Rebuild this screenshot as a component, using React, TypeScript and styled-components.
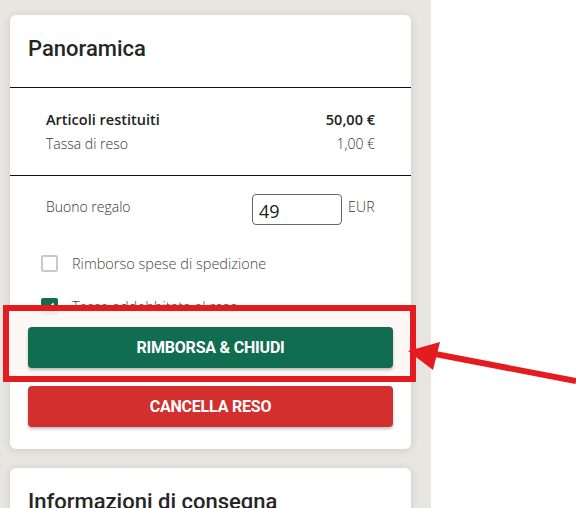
import React from "react";
import styled, { createGlobalStyle } from "styled-components";

const GlobalStyle = createGlobalStyle`
  html, body {
    margin: 0;
    padding: 0;
    background: #ffffff;
    width: 576px;
    height: 508px;
    overflow: hidden;
  }
  * {
    box-sizing: border-box;
  }
`;

const Page = styled.div`
  position: relative;
  display: flex;
  width: 576px;
  height: 508px;
  overflow: hidden;
`;

const Sidebar = styled.div`
  width: 431px;
  height: 100%;
  background: #e8e6e1;
  padding: 15px 20px 0 10px;
  display: flex;
  flex-direction: column;
  gap: 19px;
`;

const Card = styled.div`
  position: relative;
  background: #ffffff;
  border-radius: 6px;
  box-shadow: 0 1px 8px rgba(0, 0, 0, 0.12);
  flex-shrink: 0;
`;

const CardTitle = styled.h2`
  margin: 0;
  padding: 21px 18px 0;
  height: 72px;
  font-family: Roboto, "Liberation Sans", sans-serif;
  font-size: 22px;
  font-weight: 500;
  color: #262626;
`;

const Divider = styled.hr`
  margin: 0;
  border: none;
  border-top: 1px solid #111111;
`;

const Section = styled.div<{ $pad: string; $gap?: number }>`
  padding: ${(p) => p.$pad};
  font-family: "Open Sans", "Liberation Sans", sans-serif;
  display: flex;
  flex-direction: column;
  gap: ${(p) => p.$gap ?? 0}px;
`;

const Row = styled.div<{ $strong?: boolean }>`
  display: flex;
  justify-content: space-between;
  align-items: center;
  font-size: ${(p) => (p.$strong ? "14.5px" : "14px")};
  line-height: 24px;
  font-weight: ${(p) => (p.$strong ? 600 : 300)};
  color: ${(p) => (p.$strong ? "#222222" : "#333333")};
`;

const VoucherRow = styled.div`
  display: flex;
  align-items: center;
  font-size: 14px;
  color: #333333;
  font-weight: 300;
`;

const VoucherLabel = styled.span`
  flex: 1;
  margin-top: -7px;
`;

const AmountInput = styled.input`
  width: 90px;
  height: 31px;
  border: 1px solid #666666;
  border-radius: 4px;
  padding: 2px 6px 0;
  font-family: "Open Sans", "Liberation Sans", sans-serif;
  font-size: 18px;
  color: #222222;
  outline: none;
`;

const Currency = styled.span`
  margin-left: 6px;
  margin-top: -7px;
  letter-spacing: 0.3px;
`;

const CheckRow = styled.label`
  display: flex;
  align-items: center;
  gap: 14px;
  font-size: 14.5px;
  color: #444444;
  font-weight: 300;
  height: 17px;
  padding-left: 31px;
`;

const Box = styled.span<{ $checked?: boolean }>`
  width: 17px;
  height: 17px;
  border-radius: 2px;
  border: 2px solid ${(p) => (p.$checked ? "#116d50" : "#c9c9c9")};
  background: ${(p) => (p.$checked ? "#116d50" : "#ffffff")};
  display: flex;
  align-items: center;
  justify-content: center;
`;

const Buttons = styled.div`
  display: flex;
  flex-direction: column;
  gap: 18px;
  padding: 0 18px 22px;
`;

const ActionButton = styled.button<{ $color: string; $raised?: boolean }>`
  position: relative;
  z-index: ${(p) => (p.$raised ? 2 : "auto")};
  height: 41px;
  width: 100%;
  border: none;
  border-radius: 4px;
  background: ${(p) => p.$color};
  color: #ffffff;
  font-family: Roboto, "Liberation Sans", sans-serif;
  font-weight: 700;
  font-size: 16px;
  letter-spacing: -0.2px;
  box-shadow: 0 2px 3px rgba(0, 0, 0, 0.25);
`;

const Highlight = styled.div`
  position: absolute;
  z-index: 1;
  left: 3px;
  top: 305px;
  width: 413px;
  height: 77px;
  border: 6px solid #e51c1f;
  background: rgba(253, 247, 245, 0.94);
  pointer-events: none;
`;

const Arrow = styled.svg`
  position: absolute;
  z-index: 3;
  left: 0;
  top: 0;
  pointer-events: none;
`;

export default function App() {
  return (
    <Page>
      <GlobalStyle />
      <Sidebar>
        <Card>
          <CardTitle>Panoramica</CardTitle>
          <Divider />
          <Section $pad="20px 36px 19px">
            <Row $strong>
              <span>Articoli restituiti</span>
              <span>50,00 €</span>
            </Row>
            <Row>
              <span>Tassa di reso</span>
              <span>1,00 €</span>
            </Row>
          </Section>
          <Divider />
          <Section $pad="18px 36px 0">
            <VoucherRow>
              <VoucherLabel>Buono regalo</VoucherLabel>
              <AmountInput defaultValue="49" />
              <Currency>EUR</Currency>
            </VoucherRow>
          </Section>
          <Section $pad="30px 0 12px" $gap={26}>
            <CheckRow>
              <Box />
              <span>Rimborso spese di spedizione</span>
            </CheckRow>
            <CheckRow>
              <Box $checked>
                <svg width="11" height="11" viewBox="0 0 11 11">
                  <path d="M1.5 6 L4.2 8.6 L9.5 2.4" fill="none" stroke="#ffffff" strokeWidth="1.8" />
                </svg>
              </Box>
              <span>Tassa addebbitata al reso</span>
            </CheckRow>
          </Section>
          <Buttons>
            <ActionButton $color="#116d50" $raised>RIMBORSA &amp; CHIUDI</ActionButton>
            <ActionButton $color="#d32f2f">CANCELLA RESO</ActionButton>
          </Buttons>
        </Card>
        <Card>
          <CardTitle>Informazioni di consegna</CardTitle>
        </Card>
      </Sidebar>
      <Highlight />
      <Arrow width="576" height="508" viewBox="0 0 576 508">
        <line x1="576" y1="381" x2="430" y2="353" stroke="#e51c1f" strokeWidth="6" />
        <polygon points="408,351 440,342 433,370" fill="#e51c1f" />
      </Arrow>
    </Page>
  );
}
